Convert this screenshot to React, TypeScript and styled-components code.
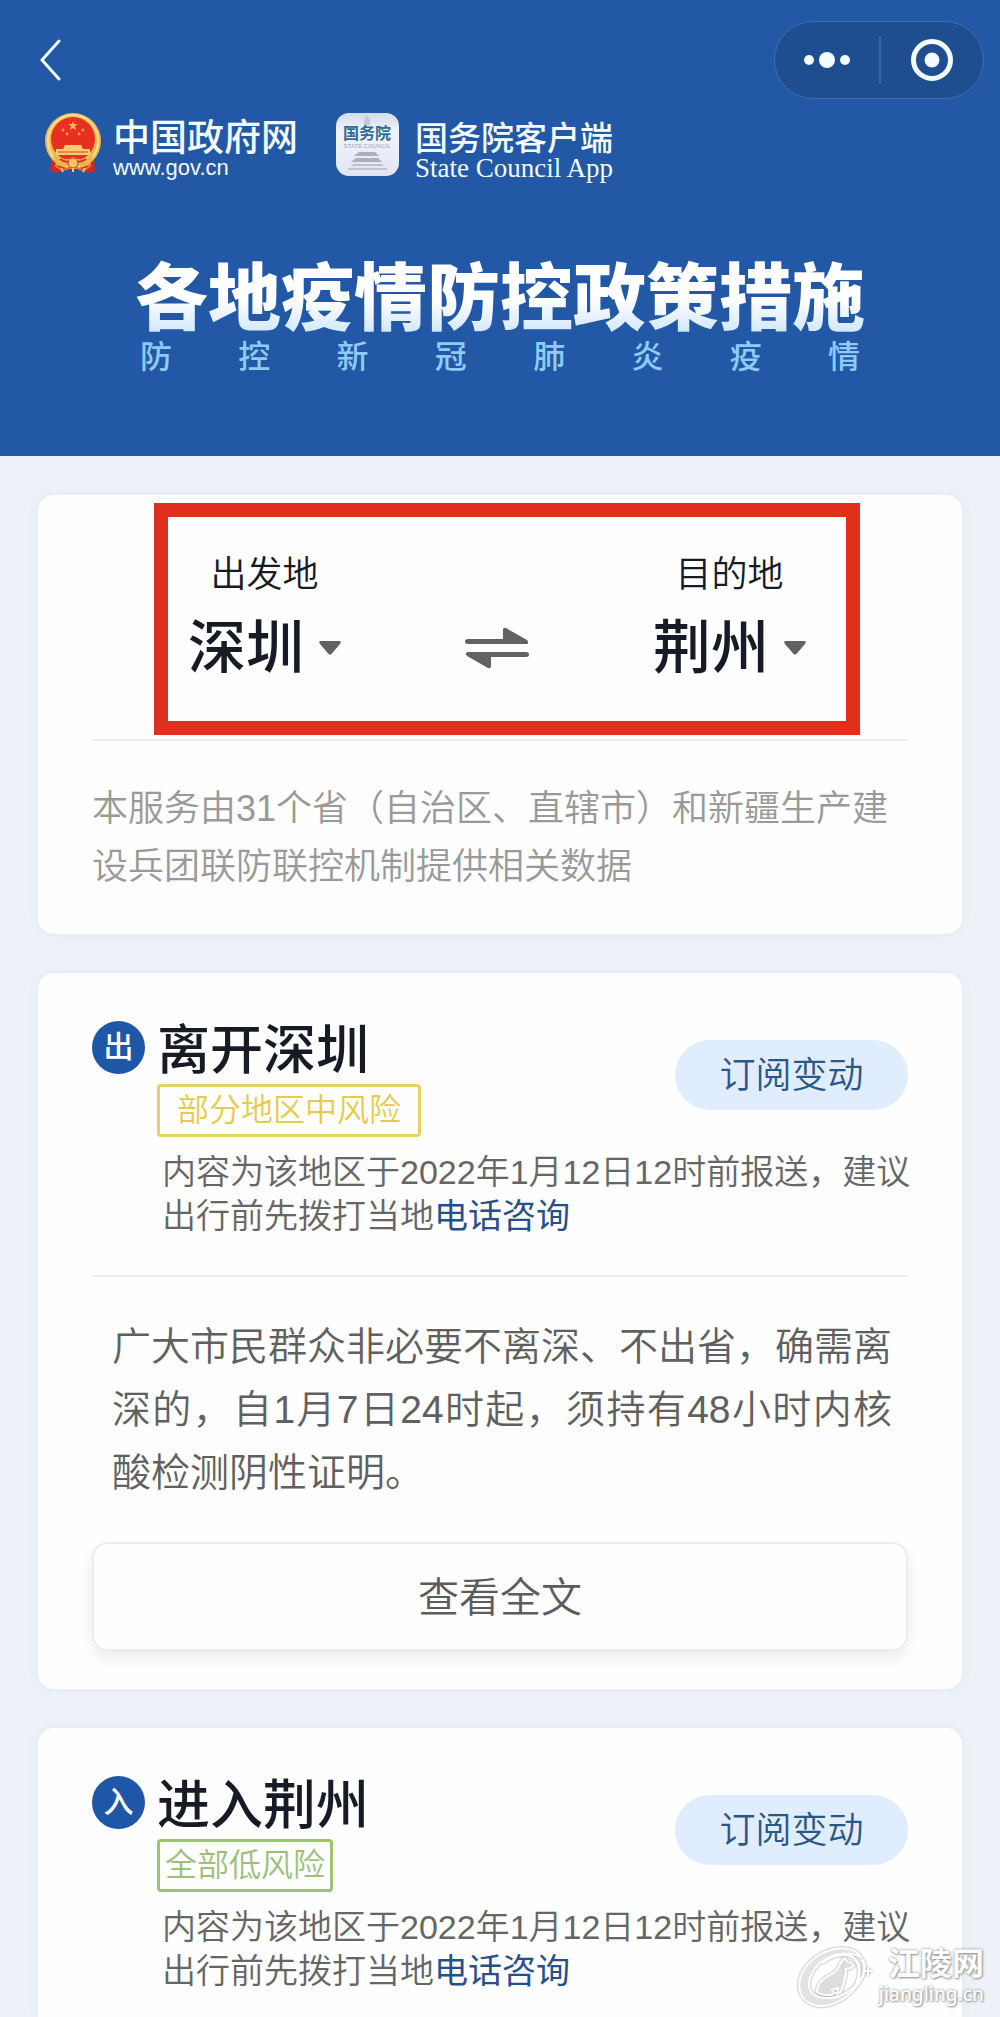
import React, { useState } from 'react';
import styled, { createGlobalStyle } from 'styled-components';

const GlobalStyle = createGlobalStyle`
  * {
    box-sizing: border-box;
  }

  body {
    margin: 0;
    background: #eef2f8;
    font-family: 'Liberation Sans', 'Noto Sans CJK SC', sans-serif;
    color: #161b26;
  }

  button, select {
    margin: 0;
    padding: 0;
    border: 0;
    background: none;
    font-family: inherit;
    color: inherit;
    cursor: pointer;
  }

  h1, h2, p {
    margin: 0;
  }
`;

const Page = styled.div`
  position: relative;
  display: flex;
  flex-direction: column;
  min-height: 100vh;
`;

const Header = styled.header`
  padding: 21px 16px 81px;
  background: #2258a5;
  color: #f2fbff;
`;

const NavBar = styled.nav`
  display: flex;
  align-items: center;
  justify-content: space-between;
`;

const BackButton = styled.button`
  display: flex;
  padding: 0 20px;
`;

const Capsule = styled.div`
  display: flex;
  align-items: center;
  height: 78px;
  border: 1px solid #3f6fb0;
  border-radius: 40px;
  background: #1e4e8f;
`;

const CapsuleButton = styled.button`
  display: flex;
  align-items: center;
  justify-content: center;
  width: 104px;
  height: 48px;

  & + & {
    border-left: 2px solid #3a669f;
  }
`;

const Brands = styled.div`
  display: flex;
  gap: 38px;
  margin-top: 14px;
  padding-left: 29px;
`;

const Brand = styled.div`
  display: flex;
  align-items: flex-start;
  height: 64px;
`;

const BrandText = styled.div<{ $gap: number }>`
  display: flex;
  flex-direction: column;
  margin-left: ${(props) => props.$gap}px;
  padding-top: 8px;
`;

const BrandName = styled.span<{ $size: number }>`
  font-size: ${(props) => props.$size}px;
  font-weight: 500;
  line-height: 35px;
`;

const BrandSite = styled.span`
  font-size: 22px;
  line-height: 24px;
`;

const BrandEnglish = styled.span`
  font-family: 'Liberation Serif', serif;
  font-size: 27px;
  line-height: 24px;
`;

const Banner = styled.div`
  display: flex;
  flex-direction: column;
  align-items: center;
  margin-top: 82px;
`;

const BannerTitle = styled.h1`
  font-size: 73px;
  font-weight: 900;
  line-height: 80px;
  background: linear-gradient(#ffffff 50%, #d3e8fd 90%);
  background-clip: text;
  color: transparent;
`;

const BannerSubtitle = styled.p`
  width: 720px;
  color: #8fcbf7;
  font-size: 32px;
  font-weight: 500;
  line-height: 36px;
  text-align: justify;
  text-align-last: justify;
`;

const Main = styled.main`
  display: flex;
  flex: 1;
  flex-direction: column;
  gap: 39px;
  padding: 39px 38px 0;
`;

const Card = styled.section`
  padding: 48px 54px 38px;
  border-radius: 16px;
  background: #fefefe;
  box-shadow: 0 0 12px rgba(60, 80, 110, 0.07);

  &:last-child {
    flex: 1;
    padding-bottom: 24px;
    border-radius: 16px 16px 0 0;
  }
`;

const RouteCard = styled(Card)`
  padding-top: 8px;
`;

const Route = styled.div`
  display: flex;
  align-items: flex-end;
  justify-content: space-between;
  margin: 0 48px 4px 62px;
  padding: 36px 40px 37px 20px;
  border: 14px solid #e0301c;
`;

const CityField = styled.label`
  display: flex;
  flex-direction: column;
  align-items: center;
  gap: 15px;
  font-size: 36px;
  font-weight: 350;
  line-height: 44px;
`;

const CityPicker = styled.span`
  display: flex;
  align-items: center;
  gap: 14px;
`;

const CitySelect = styled.select`
  appearance: none;
  height: 72px;
  font-size: 58px;
  font-weight: 500;
  line-height: 72px;
`;

const SwapButton = styled.button`
  display: flex;
  align-items: center;
  height: 72px;
`;

const Divider = styled.hr`
  height: 2px;
  margin: 0;
  border: 0;
  background: #ededee;
`;

const Notice = styled.p`
  margin-top: 39px;
  color: #999;
  font-size: 36px;
  font-weight: 350;
  line-height: 58px;
`;

const CardHead = styled.div`
  display: flex;
  align-items: flex-start;
`;

const Direction = styled.span`
  display: flex;
  align-items: center;
  justify-content: center;
  width: 53px;
  height: 53px;
  margin-right: 12px;
  padding-bottom: 8px;
  border-radius: 50%;
  background: #1f57a8;
  color: #fff;
  font-size: 30px;
  font-weight: 500;
`;

const Heading = styled.div`
  flex: 1;
`;

const CardTitle = styled.h2`
  font-size: 53px;
  font-weight: 500;
  line-height: 60px;
`;

type Risk = 'medium' | 'low';

const RiskTag = styled.span<{ $risk: Risk }>`
  display: inline-block;
  margin-top: 3px;
  padding: 0 ${(props) => (props.$risk === 'medium' ? 17 : 5)}px;
  border: 3px solid ${(props) => (props.$risk === 'medium' ? '#e8d35a' : '#9cc46c')};
  border-radius: 4px;
  color: ${(props) => (props.$risk === 'medium' ? '#e6cb4c' : '#9cc07c')};
  font-size: 32px;
  font-weight: 350;
  line-height: 47px;
  vertical-align: top;
`;

const SubscribeButton = styled.button`
  width: 233px;
  height: 70px;
  margin-top: 19px;
  padding-bottom: 7px;
  border-radius: 35px;
  background: #e0edfe;
  color: #2b5788;
  font-size: 36px;
  font-weight: 350;
`;

const Report = styled.p`
  margin: 13px -10px 0 70px;
  color: #666;
  font-size: 34px;
  font-weight: 350;
  line-height: 44px;

  & + ${Divider} {
    margin-top: 37px;
  }
`;

const PhoneLink = styled.a`
  color: #274f8a;
  font-weight: 400;
  text-decoration: none;
`;

const Policy = styled.p`
  margin: 38px 16px 38px 20px;
  color: #606060;
  font-size: 39px;
  font-weight: 350;
  line-height: 63px;
  text-align: justify;
`;

const FullTextButton = styled.button`
  display: block;
  width: 100%;
  height: 109px;
  padding-bottom: 5px;
  border: 2px solid #ececec;
  border-radius: 16px;
  box-shadow: 0 8px 16px rgba(0, 0, 0, 0.07);
  color: #5c5c5c;
  font-size: 41px;
  font-weight: 350;
`;

const Watermark = styled.div`
  position: absolute;
  right: 16px;
  bottom: 9px;
  display: flex;
  align-items: center;
  gap: 6px;
  color: #fff;
  text-shadow: 0 0 3px #8b8b8b, 1px 1px 2px #a5a5a5;
`;

const WatermarkText = styled.div`
  display: flex;
  flex-direction: column;
  align-items: flex-end;
`;

const WatermarkName = styled.span`
  font-size: 32px;
  font-weight: 700;
  line-height: 34px;
`;

const WatermarkSite = styled.span`
  font-family: 'Noto Sans', sans-serif;
  font-size: 19px;
  font-weight: 500;
  line-height: 26px;
`;

const EmblemIcon = () => (
  <svg width="56" height="62" viewBox="0 0 56 62" aria-hidden="true">
    <path d="M7 43 L5 57 Q10 62 17 58 L28 55 L39 58 Q46 62 50 57 L49 43 Z" fill="#d02a20" />
    <ellipse cx="28" cy="28" rx="28" ry="28" fill="#f2b950" />
    <ellipse cx="28" cy="28" rx="25" ry="26" fill="none" stroke="#f9dd91" strokeWidth="2" />
    <ellipse cx="28" cy="26" rx="22" ry="22" fill="#e7301f" />
    <path d="M28 8 l1 3 h4 l-3 2 1 4 -3 -2 -3 2 1 -4 -3 -2 h4 z" fill="#f8b163" />
    <g fill="#f39a55">
      <circle cx="18" cy="17" r="1.4" />
      <circle cx="22" cy="21" r="1.4" />
      <circle cx="34" cy="21" r="1.4" />
      <circle cx="38" cy="17" r="1.4" />
    </g>
    <path d="M20 32 h16 l2 4 h7 v6 H11 v-6 h7 z" fill="#f8cc70" />
    <path d="M13 39 h30" stroke="#d8442b" strokeWidth="1" />
    <path d="M8 42 Q17 50 28 44 Q39 50 48 42 L45 52 Q36 55 28 51 Q20 55 11 52 Z" fill="#edb44a" />
    <path d="M15 46 Q22 51 28 47 Q34 51 41 46" fill="none" stroke="#cc3523" strokeWidth="2" />
    <circle cx="28" cy="50" r="5" fill="#f7c766" stroke="#c9401f" />
    <path d="M10 52 Q18 60 25 54 M46 52 Q38 60 31 54" fill="none" stroke="#ef6b38" strokeWidth="2" />
    <path d="M16 55 l2 4 M40 55 l-2 4 M28 55 v4" stroke="#f4c96e" strokeWidth="2" />
  </svg>
);

const CouncilIcon = () => (
  <svg width="63" height="63" viewBox="0 0 63 63" aria-hidden="true">
    <defs>
      <linearGradient id="councilBg" x1="0" y1="0" x2="0" y2="1">
        <stop offset="0" stopColor="#d3dcea" />
        <stop offset="0.3" stopColor="#f1f4fb" />
        <stop offset="1" stopColor="#e2e5f0" />
      </linearGradient>
    </defs>
    <rect width="63" height="63" rx="13" fill="url(#councilBg)" />
    <path d="M31 2 l3 5 v5 h-6 V7 z" fill="#bdc9dc" />
    <text x="31" y="26" textAnchor="middle" fontSize="16" fontWeight="700" fill="#2f6b98">
      国务院
    </text>
    <text x="31" y="35" textAnchor="middle" fontSize="6" fill="#9aa5b3">
      STATE COUNCIL
    </text>
    <g fill="#a9afc0">
      <path d="M23 39 h16 l4 4 H18 z" />
      <path d="M20 45 h22 l4 4 H15 z" />
      <path d="M18 51 h27 l3 2 H14 z" opacity="0.7" />
      <path d="M12 55 h39 v2 H12 z" opacity="0.6" />
    </g>
  </svg>
);

const SwapIcon = () => (
  <svg width="64" height="42" viewBox="0 0 64 42" fill="#626264" aria-hidden="true">
    <path d="M3 12 H38 V2 Q39 0 41 1 L62 13 Q65 17 61 17 H3 Q0 17 0 14.500 Q0 12 3 12 Z" />
    <path d="M61 25 H3 Q-1 26 2 29 L23 41 Q26 42 26 39 V30 H61 Q64 30 64 27.500 Q64 25 61 25 Z" />
  </svg>
);

const CaretIcon = () => (
  <svg width="22" height="14" viewBox="0 0 22 14" fill="#626264" aria-hidden="true">
    <path d="M2 0 H20 Q23 0 21 3 L12.500 13 Q11 14 9.500 13 L1 3 Q-1 0 2 0 Z" />
  </svg>
);

const WatermarkIcon = () => (
  <svg
    width="76"
    height="62"
    viewBox="0 0 76 62"
    fill="none"
    stroke="#fff"
    filter="drop-shadow(0 0 1px #8f8f8f)"
    aria-hidden="true"
  >
    <path
      d="M65 12 C56 -3 28 0 12 17 C-4 34 0 58 22 60 C39 61 56 49 63 34 C55 45 41 53 28 52 C11 51 8 38 17 24 C27 9 51 3 65 12 Z"
      fill="#e3e3e3"
      strokeWidth="2"
    />
    <path d="M65 13 C71 23 65 34 58 41 C64 29 64 20 58 13 C49 5 34 9 25 17" strokeWidth="3" />
    <path
      d="M20 46 C20 35 29 31 38 26 C43 22 42 15 48 12 L50 15 L57 19 L54 22 L49 23 C50 32 45 39 44 46 L40 48 L41 42 L35 44 L38 47 L34 49 C29 49 25 50 20 46 Z"
      fill="#ddd"
      strokeWidth="2"
    />
    <path d="M71 21 v9 M67 25 h8" strokeWidth="2" />
  </svg>
);

interface CityProps {
  label: string;
  city: string;
  cities: string[];
  onChange: (city: string) => void;
}

const City: React.FC<CityProps> = ({ label, city, cities, onChange }) => (
  <CityField>
    {label}
    <CityPicker>
      <CitySelect value={city} onChange={(e) => onChange(e.target.value)}>
        {cities.map((name) => (
          <option key={name}>{name}</option>
        ))}
      </CitySelect>
      <CaretIcon />
    </CityPicker>
  </CityField>
);

interface PolicyCardProps {
  direction: string;
  title: string;
  risk: Risk;
  riskText: string;
  children?: React.ReactNode;
}

const PolicyCard: React.FC<PolicyCardProps> = (props) => (
  <Card>
    <CardHead>
      <Direction>{props.direction}</Direction>
      <Heading>
        <CardTitle>{props.title}</CardTitle>
        <RiskTag $risk={props.risk}>{props.riskText}</RiskTag>
      </Heading>
      <SubscribeButton>订阅变动</SubscribeButton>
    </CardHead>
    <Report>
      内容为该地区于2022年1月12日12时前报送，建议出行前先拨打当地
      <PhoneLink href="#phone">电话咨询</PhoneLink>
    </Report>
    {props.children}
  </Card>
);

const App = () => {
  const [from, setFrom] = useState('深圳');
  const [to, setTo] = useState('荆州');
  const cities = ['深圳', '荆州'];

  const handleSwap = () => {
    setFrom(to);
    setTo(from);
  };

  return (
    <Page>
      <GlobalStyle />
      <Header>
        <NavBar>
          <BackButton aria-label="返回">
            <svg width="28" height="42" viewBox="0 0 28 42" fill="none" aria-hidden="true">
              <path
                d="M23 2 L6 21 L23 40"
                stroke="#f2fbff"
                strokeWidth="3"
                strokeLinecap="round"
                strokeLinejoin="round"
              />
            </svg>
          </BackButton>
          <Capsule>
            <CapsuleButton aria-label="更多">
              <svg width="46" height="16" viewBox="0 0 46 16" fill="#f2fbff" aria-hidden="true">
                <circle cx="5" cy="8" r="5" />
                <circle cx="23" cy="8" r="8" />
                <circle cx="41" cy="8" r="5" />
              </svg>
            </CapsuleButton>
            <CapsuleButton aria-label="关闭">
              <svg width="44" height="44" viewBox="0 0 44 44" aria-hidden="true">
                <circle cx="22" cy="22" r="18.500" fill="none" stroke="#f2fbff" strokeWidth="5" />
                <circle cx="22" cy="22" r="7.500" fill="#f2fbff" />
              </svg>
            </CapsuleButton>
          </Capsule>
        </NavBar>
        <Brands>
          <Brand>
            <EmblemIcon />
            <BrandText $gap={12}>
              <BrandName $size={37}>中国政府网</BrandName>
              <BrandSite>www.gov.cn</BrandSite>
            </BrandText>
          </Brand>
          <Brand>
            <CouncilIcon />
            <BrandText $gap={16}>
              <BrandName $size={33}>国务院客户端</BrandName>
              <BrandEnglish>State Council App</BrandEnglish>
            </BrandText>
          </Brand>
        </Brands>
        <Banner>
          <BannerTitle>各地疫情防控政策措施</BannerTitle>
          <BannerSubtitle>防控新冠肺炎疫情</BannerSubtitle>
        </Banner>
      </Header>

      <Main>
        <RouteCard>
          <Route>
            <City label="出发地" city={from} cities={cities} onChange={setFrom} />
            <SwapButton aria-label="交换" onClick={handleSwap}>
              <SwapIcon />
            </SwapButton>
            <City label="目的地" city={to} cities={cities} onChange={setTo} />
          </Route>
          <Divider />
          <Notice>
            本服务由31个省（自治区、直辖市）和新疆生产建设兵团联防联控机制提供相关数据
          </Notice>
        </RouteCard>

        <PolicyCard direction="出" title="离开深圳" risk="medium" riskText="部分地区中风险">
          <Divider />
          <Policy>
            广大市民群众非必要不离深、不出省，确需离深的，自1月7日24时起，须持有48小时内核酸检测阴性证明。
          </Policy>
          <FullTextButton>查看全文</FullTextButton>
        </PolicyCard>

        <PolicyCard direction="入" title="进入荆州" risk="low" riskText="全部低风险" />
      </Main>

      <Watermark>
        <WatermarkIcon />
        <WatermarkText>
          <WatermarkName>江陵网</WatermarkName>
          <WatermarkSite>jiangling.cn</WatermarkSite>
        </WatermarkText>
      </Watermark>
    </Page>
  );
};

export default App;
